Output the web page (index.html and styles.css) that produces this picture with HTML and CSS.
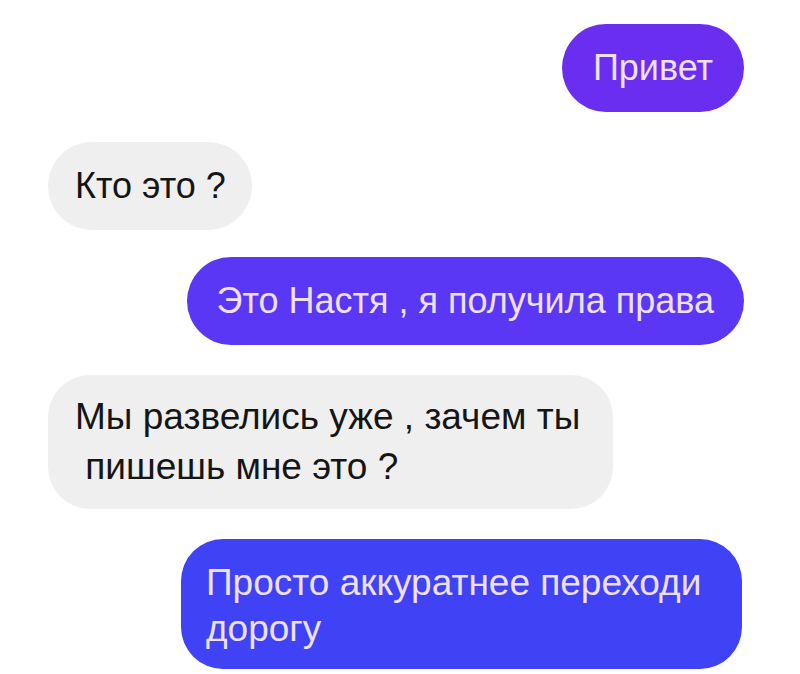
FILE: index.html
```html
<!DOCTYPE html>
<html lang="ru">
<head>
<meta charset="utf-8">
<title>Чат</title>
<link rel="stylesheet" href="styles.css">
</head>
<body>
<main class="chat">
  <div class="msg out out-1">Привет</div>
  <div class="msg in in-1">Кто это ?</div>
  <div class="msg out out-2">Это Настя , я получила права</div>
  <div class="msg in in-2 multi">Мы развелись уже , зачем ты<br>&nbsp;пишешь мне это ?</div>
  <div class="msg out out-3 multi">Просто аккуратнее переходи<br>дорогу</div>
</main>
</body>
</html>
```
FILE: styles.css
```css
html, body {
  margin: 0;
  padding: 0;
  background: #ffffff;
}
body {
  width: 800px;
  height: 674px;
  overflow: hidden;
  font-family: "Liberation Sans", Arial, sans-serif;
}
.chat {
  display: flex;
  flex-direction: column;
  gap: 30px;
  padding: 24px 56px 0 48px;
}
.msg {
  font-size: 36px;
  line-height: 48px;
  padding: 20px 28px;
  border-radius: 44px;
  white-space: nowrap;
  box-sizing: border-box;
}
.in {
  align-self: flex-start;
  background: #efefef;
  color: #151515;
}
.out {
  align-self: flex-end;
  color: #efe0f7;
}
.out-1 {
  background: #6a2ef1;
  padding: 20px 31px;
}
.in-1 {
  padding: 20px 26px 20px 27px;
}
.out-2 {
  background: #5a37f4;
  padding: 20px 30px;
  margin-top: -3px;
}
.out-3 {
  background: #4043f5;
}
.multi {
  font-size: 37px;
  border-radius: 42px;
}
.in-2 {
  width: 565px;
  line-height: 50px;
  padding: 17px 27px;
}
.out-3.multi {
  width: 561px;
  line-height: 46px;
  padding: 21px 25px 17px;
  margin-right: 2px;
}
```
